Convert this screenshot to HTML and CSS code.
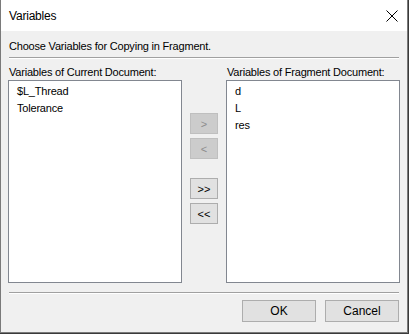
FILE: index.html
```html
<!DOCTYPE html>
<html lang="en">
<head>
    <meta charset="UTF-8">
    <title>Variables</title>
    <link rel="stylesheet" href="styles.css">
</head>
<body>
    <div class="window">
        <div class="titlebar">
            <span class="title">Variables</span>
            <svg class="close" width="12" height="12" viewBox="0 0 12 12">
                <path d="M0.5 0.5 L11.5 11.5 M11.5 0.5 L0.5 11.5" stroke="#000" stroke-width="1" fill="none"/>
            </svg>
        </div>
        <div class="content">
            <p class="prompt">Choose Variables for Copying in Fragment.</p>
            <div class="separator"></div>
            <div class="columns">
                <div class="column">
                    <label class="list-label">Variables of Current Document:</label>
                    <ul class="listbox">
                        <li>$L_Thread</li>
                        <li>Tolerance</li>
                    </ul>
                </div>
                <div class="move-buttons">
                    <button class="small-btn" disabled>&gt;</button>
                    <button class="small-btn" disabled>&lt;</button>
                    <button class="small-btn gap-top">&gt;&gt;</button>
                    <button class="small-btn">&lt;&lt;</button>
                </div>
                <div class="column">
                    <label class="list-label">Variables of Fragment Document:</label>
                    <ul class="listbox">
                        <li>d</li>
                        <li>L</li>
                        <li>res</li>
                    </ul>
                </div>
            </div>
            <div class="separator bottom"></div>
            <div class="actions">
                <button class="dlg-btn">OK</button>
                <button class="dlg-btn">Cancel</button>
            </div>
        </div>
    </div>
</body>
</html>
```

FILE: styles.css
```css
* {
    margin: 0;
    padding: 0;
    box-sizing: border-box;
}

body {
    background-color: #3a3a3a;
    font-family: "Liberation Sans", Arial, sans-serif;
    font-size: 11px;
    letter-spacing: -0.2px;
    color: #000;
}

.window {
    width: 408px;
    height: 333px;
    border: 1px solid #7a7a7a;
    border-top: none;
    background-color: #f0f0f0;
    display: flex;
    flex-direction: column;
}

.titlebar {
    height: 31px;
    background-color: #fff;
    display: flex;
    align-items: center;
    justify-content: space-between;
    padding: 0 9px 0 8px;
}

.title {
    font-size: 12px;
}

.close {
    width: 12px;
    height: 12px;
}

.content {
    flex: 1;
    padding: 0 8px;
    display: flex;
    flex-direction: column;
}

.prompt {
    margin-top: 8px;
    line-height: 15px;
}

.separator {
    height: 2px;
    margin-top: 3px;
    border-top: 1px solid #a0a0a0;
    border-bottom: 1px solid #fff;
}

.columns {
    display: grid;
    grid-template-columns: 174px 44px 174px;
    margin: 6px -1px 0;
}

.column {
    display: flex;
    flex-direction: column;
}

.list-label {
    display: block;
    line-height: 15px;
    padding-left: 1px;
}

.listbox {
    list-style: none;
    height: 203px;
    background-color: #fff;
    border: 1px solid #828790;
    padding: 2px 0 0 8px;
}

.listbox li {
    line-height: 17px;
}

.move-buttons {
    display: flex;
    flex-direction: column;
    align-items: flex-start;
    gap: 4px;
    padding: 48px 0 0 8px;
}

.small-btn {
    width: 28px;
    height: 21px;
    background-color: #e1e1e1;
    border: 1px solid #adadad;
    font-family: "Liberation Sans", Arial, sans-serif;
    font-size: 11px;
    color: #000;
}

.small-btn:disabled {
    background-color: #cccccc;
    border-color: #bfbfbf;
    color: #8d8d8d;
}

.gap-top {
    margin-top: 15px;
}

.separator.bottom {
    margin-top: 9px;
}

.actions {
    display: flex;
    justify-content: flex-end;
    gap: 9px;
    margin-top: 6px;
}

.dlg-btn {
    width: 74px;
    height: 22px;
    background-color: #e1e1e1;
    border: 1px solid #adadad;
    font-family: "Liberation Sans", Arial, sans-serif;
    font-size: 12px;
    color: #000;
}
```
